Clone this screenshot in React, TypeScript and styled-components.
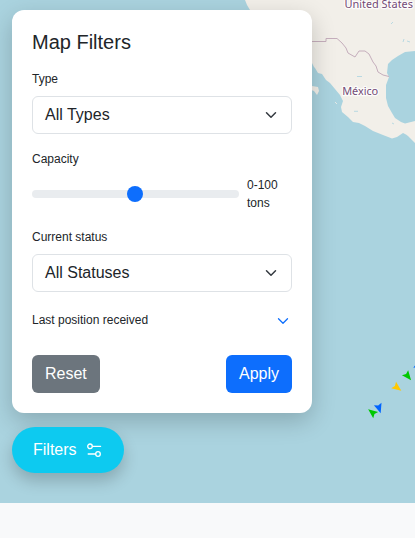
import React from 'react';
import styled, { createGlobalStyle } from 'styled-components';

const GlobalStyle = createGlobalStyle`
  *, *::before, *::after { box-sizing: border-box; }
  body {
    margin: 0;
    background: #f8f9fa;
    color: #212529;
    font: 16px/24px "Liberation Sans", Arial, sans-serif;
    overflow: hidden;
  }
`;

const MapArea = styled.main`
  position: relative;
  height: 503px;
  overflow: hidden;
  background: #aad3df;
`;

const MapCanvas = styled.svg`
  position: absolute;
  inset: 0;
  display: block;
`;

const Overlay = styled.div`
  position: relative;
  display: flex;
  flex-direction: column;
  align-items: flex-start;
  gap: 14px;
  padding: 10px 12px;
`;

const Panel = styled.section`
  display: flex;
  flex-direction: column;
  width: 300px;
  height: 403px;
  padding: 20px;
  border-radius: 12px;
  background: #fff;
  box-shadow: 0 8px 24px rgba(0, 0, 0, 0.2);
`;

const Title = styled.h5`
  margin: 0 0 16px;
  font-size: 20px;
  font-weight: 400;
  line-height: 24px;
`;

const Field = styled.div<{ $gap: number }>`
  display: flex;
  flex-direction: column;
  gap: 8px;
  margin-bottom: ${(p) => p.$gap}px;
`;

const Label = styled.label`
  font-size: 12px;
  line-height: 18px;
`;

const SelectBox = styled.button`
  display: flex;
  align-items: center;
  justify-content: space-between;
  height: 38px;
  padding: 0 14px 0 12px;
  border: 1px solid #dee2e6;
  border-radius: 6px;
  background: #fff;
  color: inherit;
  font: inherit;
`;

const SliderRow = styled.div`
  display: flex;
  align-items: center;
  gap: 8px;
`;

const Track = styled.div`
  display: flex;
  align-items: center;
  justify-content: center;
  width: 207px;
  height: 8px;
  padding-right: 1px;
  border-radius: 8px;
  background: #e9ecef;
`;

const Thumb = styled.span`
  flex: none;
  width: 16px;
  height: 16px;
  border-radius: 50%;
  background: #0d6efd;
`;

const RangeText = styled.span`
  width: 45px;
  font-size: 12px;
  line-height: 18px;
`;

const CollapseRow = styled.div`
  display: flex;
  align-items: center;
  justify-content: space-between;
  height: 18px;
  padding-right: 3px;

  svg { margin-top: 2px; }
`;

const Actions = styled.div`
  display: flex;
  justify-content: space-between;
  margin-top: auto;
`;

const Button = styled.button<{ $color: string }>`
  height: 38px;
  padding: 0 13px;
  border: 0;
  border-radius: 6px;
  background: ${(p) => p.$color};
  color: #fff;
  font: inherit;
`;

const FilterToggle = styled.button`
  display: flex;
  align-items: center;
  gap: 9px;
  width: 112px;
  height: 46px;
  padding: 0 21px;
  border: 0;
  border-radius: 23px;
  background: #0dcaf0;
  color: #fff;
  font: inherit;
  box-shadow: 0 8px 16px rgba(0, 0, 0, 0.2);

  svg { flex: none; }
`;

const Chevron = ({ color = '#343a40', weight = 2 }) => (
  <svg width="12" height="12" viewBox="0 0 16 16" fill="none" stroke={color} strokeWidth={weight} strokeLinecap="round" strokeLinejoin="round">
    <path d="m2 5 6 6 6-6" />
  </svg>
);

const SlidersIcon = () => (
  <svg width="16" height="16" viewBox="0 0 16 16" fill="none" stroke="#fff" strokeWidth="1.3" strokeLinecap="round">
    <circle cx="4" cy="4.3" r="2.3" />
    <path d="M6.5 4.3H14.6M2.2 12H9.5" />
    <circle cx="12" cy="12" r="2.3" />
  </svg>
);

const vessels = [
  { x: 407.7, y: 376, turn: -39, color: '#00c800' },
  { x: 397, y: 387.5, turn: -53, color: '#ffc800' },
  { x: 379, y: 408, turn: -18, color: '#0064ff' },
  { x: 372.4, y: 412.5, turn: 128, color: '#00c800' },
  { x: 418, y: 365, turn: 60, color: '#0064ff' },
];

const WorldMap = () => (
  <MapCanvas width="415" height="503" viewBox="0 0 415 503">
    <path
      fill="#f2efe9"
      d="M245 0 247 5 250 10 265 40 300 55 312 63 314 67 315 68 318 73 322 74 326 80 330 83 335 89 340 95 343 101 341 107 342 112 348 117 353 122 359 123 365 126 373 131 383 135 392 138.5 397 137 403 133 406 134.5 408 136 415 143V121L405 123.5 401 122 395 118 392 113 388 106 386 98 386 85 389 77 387 73 388 64 392 60 398 56 405 52 415 51V0Z"
    />
    <path fill="#f2efe9" d="M306 80 312 86 318 87 319 91 317 95 314 91 311 90 305 84Z" />
    <path fill="none" stroke="#c5aebc" d="M300 41.5H326V38.5H337L342 43 346 48 348 53 355 57 359 51H365L369 54 373 62 376 66 378 72 383 75 389 76.5" />
    <path stroke="#aad3df" strokeWidth=".8" d="M357 76.5h5M354 111.3h4M391 24l2-2M403 42l1-3M407 41l3 1M392 123l2 1" />
    <path stroke="#f2efe9" strokeWidth=".8" d="M335 102l2 2" />
    <g fill="#734a76" stroke="#fff" strokeOpacity=".8" strokeWidth="2.5" strokeLinejoin="round" paintOrder="stroke" fontFamily="Noto Sans, sans-serif" fontSize="11">
      <text x="344.5" y="8" textLength="68.5">United States</text>
      <text x="342.2" y="95" textLength="36">México</text>
    </g>
    {vessels.map((v) => (
      <path key={`${v.x}-${v.y}`} fill={v.color} transform={`translate(${v.x} ${v.y}) rotate(${v.turn})`} d="M0 5.4-4-4.2 0-2.6 4-4.2Z" />
    ))}
  </MapCanvas>
);

export default function App() {
  return (
    <>
      <GlobalStyle />
      <MapArea>
        <WorldMap />
        <Overlay>
          <Panel>
            <Title>Map Filters</Title>
            <Field $gap={16}>
              <Label>Type</Label>
              <SelectBox>All Types<Chevron /></SelectBox>
            </Field>
            <Field $gap={16}>
              <Label>Capacity</Label>
              <SliderRow>
                <Track><Thumb /></Track>
                <RangeText>0-100 tons</RangeText>
              </SliderRow>
            </Field>
            <Field $gap={19}>
              <Label>Current status</Label>
              <SelectBox>All Statuses<Chevron /></SelectBox>
            </Field>
            <CollapseRow>
              <Label>Last position received</Label>
              <Chevron color="#0d6efd" weight={1.7} />
            </CollapseRow>
            <Actions>
              <Button $color="#6c757d">Reset</Button>
              <Button $color="#0d6efd">Apply</Button>
            </Actions>
          </Panel>
          <FilterToggle>Filters<SlidersIcon /></FilterToggle>
        </Overlay>
      </MapArea>
    </>
  );
}
